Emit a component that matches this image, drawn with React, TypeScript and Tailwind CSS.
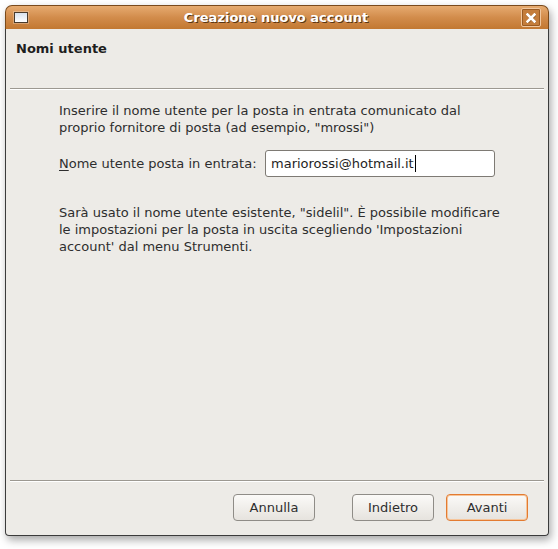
import React from "react";

const font = { fontFamily: '"DejaVu Sans", "Liberation Sans", sans-serif' };

function Btn({ label, def }: { label: string; def?: boolean }) {
  return (
    <button
      className={
        "h-[27px] w-[82px] rounded-[4px] border text-[13px] text-[#2e2e2e] bg-gradient-to-b from-[#fbfaf8] to-[#e6e3de] " +
        (def ? "border-[#e37b31] shadow-[inset_0_0_0_1px_#f6c59a]" : "border-[#8f8c87]")
      }
      style={font}
    >
      {label}
    </button>
  );
}

export default function App() {
  return (
    <div className="w-[558px] h-[549px] bg-white pt-[5px] pl-[5px]" style={font}>
      <div className="w-[544px] h-[531px] flex flex-col rounded-t-[7px] rounded-b-[4px] shadow-[2px_4px_8px_rgba(0,0,0,0.35)]">
        {/* Title bar */}
        <div className="h-[24px] flex items-center rounded-t-[7px] border border-b-0 border-[#7a4a1c] bg-gradient-to-b from-[#e6ab70] via-[#d28c4b] to-[#c27831] px-[7px]">
          <div className="w-[14px] h-[11px] border border-[#4a3b2c] bg-gradient-to-b from-[#d8e2ee] to-[#ffffff] shadow-[0_0_0_1px_rgba(255,255,255,0.25)] ml-[1px]" />
          <div className="flex-1 text-center text-white font-bold text-[13px] leading-none pl-[3px] pb-[1px] [text-shadow:1px_1px_0_#5a3513]">
            Creazione nuovo account
          </div>
          <div className="w-[20px] h-[19px] rounded-[2px] border border-[#f0c79f] bg-[#c47d3b] flex items-center justify-center shadow-[inset_0_0_0_1px_#9a5b22]">
            <svg width="10" height="10" viewBox="0 0 10 10">
              <path d="M1.5 1.5 L8.5 8.5 M8.5 1.5 L1.5 8.5" stroke="#5a3513" strokeWidth="3" strokeLinecap="square" transform="translate(0.5,0.5)" opacity="0.5" />
              <path d="M1.5 1.5 L8.5 8.5 M8.5 1.5 L1.5 8.5" stroke="#ffffff" strokeWidth="2.6" strokeLinecap="square" />
            </svg>
          </div>
        </div>
        {/* Body */}
        <div className="flex-1 flex flex-col bg-[#edebe7] border border-t-0 border-[#3b3b3b] rounded-b-[4px] px-[4px]">
          <div className="h-[59px] pt-[10px] pl-[6px] text-[13px] font-bold text-[#1e1e1e]">Nomi utente</div>
          <div className="h-[2px] border-t border-[#9c9891] border-b border-b-white" />
          <div className="flex-1 pl-[49px] pt-[12px] text-[13px] text-[#2e2e2e] leading-[17px]">
            <p className="w-[440px]">
              Inserire il nome utente per la posta in entrata comunicato dal proprio fornitore di posta (ad esempio, "mrossi")
            </p>
            <div className="flex items-center mt-[14px]">
              <span className="w-[206px]">
                <span className="underline underline-offset-2">N</span>ome utente posta in entrata:
              </span>
              <div className="w-[230px] h-[27px] rounded-[3px] border border-[#7e7a74] bg-white flex items-center px-[5px] text-[#1e1e1e]">
                mariorossi@hotmail.it
                <span className="inline-block w-[1px] h-[17px] bg-black ml-[1px]" />
              </div>
            </div>
            <p className="w-[450px] mt-[27px]">
              Sarà usato il nome utente esistente, "sidelil". È possibile modificare le impostazioni per la posta in uscita scegliendo 'Impostazioni account' dal menu Strumenti.
            </p>
          </div>
          <div className="h-[2px] border-t border-[#9c9891] border-b border-b-white" />
          <div className="h-[53px] flex items-start justify-end pt-[12px] pr-[16px]">
            <Btn label="Annulla" />
            <div className="w-[37px]" />
            <Btn label="Indietro" />
            <div className="w-[12px]" />
            <Btn label="Avanti" def />
          </div>
        </div>
      </div>
    </div>
  );
}
